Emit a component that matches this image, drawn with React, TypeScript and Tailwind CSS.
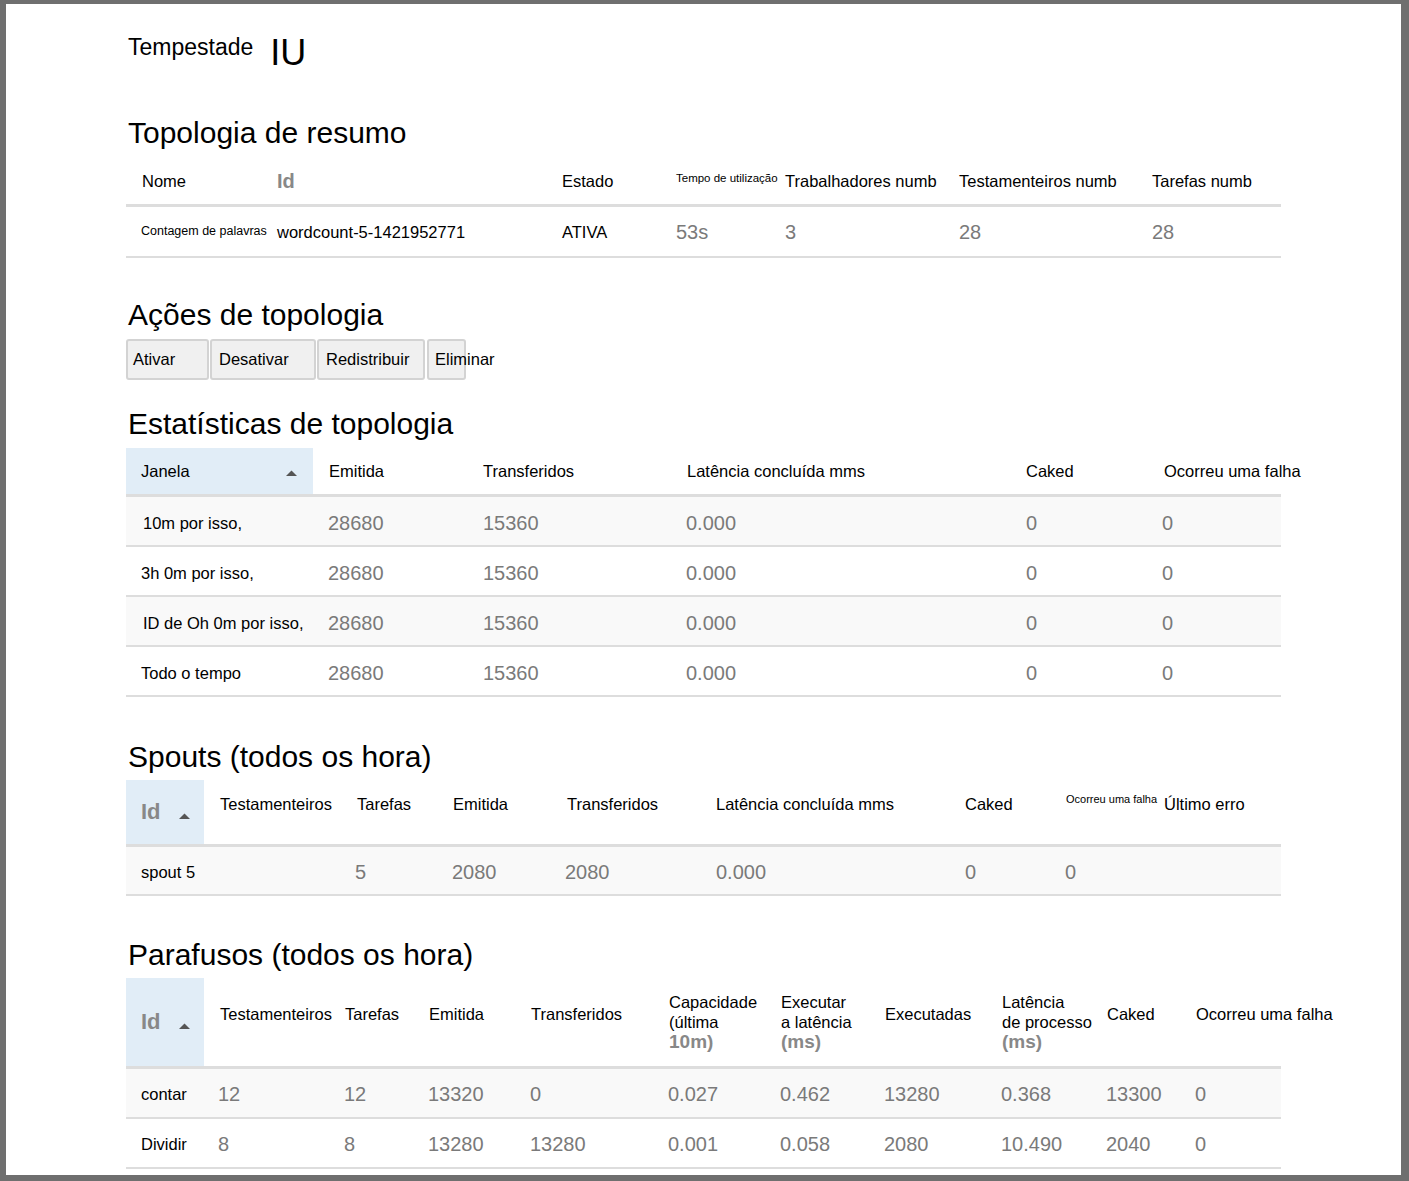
import React from "react";

const LBL = "text-[16.5px] leading-[20px] text-black whitespace-nowrap";
const VAL = "text-[20px] leading-[22px] text-[#7a7a7a] whitespace-nowrap";
const SMALL = "text-[11px] leading-[13px] text-black whitespace-nowrap";
const BOLDG = "font-bold text-[#888] whitespace-nowrap";

const Tri = ({ cls = "" }: { cls?: string }) => (
  <svg width="11" height="6" viewBox="0 0 11 6" className={cls}>
    <polygon points="0,6 5.5,0.5 11,6" fill="#555" />
  </svg>
);

const Cell = ({ children, cls = "" }: { children?: React.ReactNode; cls?: string }) => (
  <div className={`flex items-center h-full ${cls}`}>{children}</div>
);

function Heading({ children, cls = "" }: { children: React.ReactNode; cls?: string }) {
  return <h2 className={`text-[30px] leading-[30px] text-black font-normal ${cls}`}>{children}</h2>;
}

const SUM = "grid grid-cols-[151px_285px_114px_109px_174px_193px_129px]";
const STA = "grid grid-cols-[187px_155px_204px_339px_138px_132px]";
const SPO = "grid grid-cols-[78px_138px_96px_114px_149px_249px_101px_98px_132px]";
const BOL = "grid grid-cols-[78px_126px_84px_102px_138px_112px_104px_117px_105px_89px_100px]";

const statsRows = [
  { label: "10m por isso,", pl: "pl-[17px]" },
  { label: "3h 0m por isso,", pl: "pl-[15px]" },
  { label: "ID de Oh 0m por isso,", pl: "pl-[17px]" },
  { label: "Todo o tempo", pl: "pl-[15px]" },
];

const bolts = [
  ["contar", "12", "12", "13320", "0", "0.027", "0.462", "13280", "0.368", "13300", "0"],
  ["Dividir", "8", "8", "13280", "13280", "0.001", "0.058", "2080", "10.490", "2040", "0"],
];

export default function App() {
  return (
    <div className="w-[1409px] h-[1181px] bg-[#6f6f6f] pt-[4px] pl-[6px] pr-[8px] pb-[6px] font-['Liberation_Sans',Arial,sans-serif]">
      <div className="bg-white h-full overflow-hidden pl-[120px] pt-[30px]">
        {/* Title */}
        <div className="flex items-start h-[36px] pl-[2px]">
          <span className="text-[23px] leading-[23px] text-black mt-[2px]">Tempestade</span>
          <span className="text-[36px] leading-[36px] text-black ml-[17px] mt-[1px]">IU</span>
        </div>

        {/* Summary */}
        <Heading cls="mt-[48px] pl-[2px]">Topologia de resumo</Heading>
        <div className="mt-[10px] w-[1155px]">
          <div className={`${SUM} h-[49px] border-b-[3px] border-[#dddddd]`}>
            <Cell cls="pl-[16px]"><span className={LBL}>Nome</span></Cell>
            <Cell><span className={`${BOLDG} text-[20px]`}>Id</span></Cell>
            <Cell><span className={LBL}>Estado</span></Cell>
            <Cell cls="pb-[6px]"><span className="text-[11.5px] leading-[13px] text-black whitespace-nowrap">Tempo de utilização</span></Cell>
            <Cell><span className={LBL}>Trabalhadores numb</span></Cell>
            <Cell><span className={LBL}>Testamenteiros numb</span></Cell>
            <Cell><span className={LBL}>Tarefas numb</span></Cell>
          </div>
          <div className={`${SUM} h-[51px] border-b-[2px] border-[#dddddd]`}>
            <Cell cls="pl-[15px]"><span className="text-[12.5px] text-black whitespace-nowrap">Contagem de palavras</span></Cell>
            <Cell><span className={LBL}>wordcount-5-1421952771</span></Cell>
            <Cell><span className={LBL}>ATIVA</span></Cell>
            <Cell><span className={VAL}>53s</span></Cell>
            <Cell><span className={VAL}>3</span></Cell>
            <Cell><span className={VAL}>28</span></Cell>
            <Cell><span className={VAL}>28</span></Cell>
          </div>
        </div>

        {/* Actions */}
        <Heading cls="mt-[42px] pl-[2px]">Ações de topologia</Heading>
        <div className="mt-[9px] flex h-[41px] gap-[1px]">
          {[
            { t: "Ativar", w: "w-[83px]", pl: "pl-[5px]" },
            { t: "Desativar", w: "w-[106px]", pl: "pl-[7px]" },
            { t: "Redistribuir", w: "w-[108px]", pl: "pl-[7px]" },
            { t: "Eliminar", w: "w-[39px] ml-[1px]", pl: "pl-[6px]" },
          ].map((b) => (
            <button
              key={b.t}
              className={`${b.w} ${b.pl} h-[41px] flex items-center overflow-visible whitespace-nowrap text-left border-2 border-[#d3d3d3] rounded-[3px] bg-[#f0f0f0] text-[16.5px] text-black`}
            >
              {b.t}
            </button>
          ))}
        </div>

        {/* Stats */}
        <Heading cls="mt-[29px] pl-[2px]">Estatísticas de topologia</Heading>
        <div className="mt-[9px] w-[1155px]">
          <div className={`${STA} h-[49px] border-b-[3px] border-[#dddddd]`}>
            <Cell cls="pl-[15px] pr-[16px] justify-between bg-[#e1edf7]">
              <span className={LBL}>Janela</span>
              <Tri cls="mt-[4px]" />
            </Cell>
            <Cell cls="pl-[16px]"><span className={LBL}>Emitida</span></Cell>
            <Cell cls="pl-[15px]"><span className={LBL}>Transferidos</span></Cell>
            <Cell cls="pl-[15px]"><span className={LBL}>Latência concluída mms</span></Cell>
            <Cell cls="pl-[15px]"><span className={LBL}>Caked</span></Cell>
            <Cell cls="pl-[15px]"><span className={LBL}>Ocorreu uma falha</span></Cell>
          </div>
          {statsRows.map((r, i) => (
            <div
              key={r.label}
              className={`${STA} h-[50px] pt-[4px] border-b-[2px] border-[#dddddd] ${i % 2 === 0 ? "bg-[#f9f9f9]" : "bg-white"}`}
            >
              <Cell cls={r.pl}><span className={LBL}>{r.label}</span></Cell>
              <Cell cls="pl-[15px]"><span className={VAL}>28680</span></Cell>
              <Cell cls="pl-[15px]"><span className={VAL}>15360</span></Cell>
              <Cell cls="pl-[14px]"><span className={VAL}>0.000</span></Cell>
              <Cell cls="pl-[15px]"><span className={VAL}>0</span></Cell>
              <Cell cls="pl-[13px]"><span className={VAL}>0</span></Cell>
            </div>
          ))}
        </div>

        {/* Spouts */}
        <Heading cls="mt-[45px] pl-[2px]">Spouts (todos os hora)</Heading>
        <div className="mt-[8px] w-[1155px]">
          <div className={`${SPO} h-[67px] border-b-[3px] border-[#dddddd]`}>
            <Cell cls="pl-[15px] bg-[#e1edf7]">
              <span className={`${BOLDG} text-[22px] leading-[24px]`}>Id</span>
              <Tri cls="ml-[18px] mt-[8px]" />
            </Cell>
            <Cell cls="pl-[16px] pb-[16px]"><span className={LBL}>Testamenteiros</span></Cell>
            <Cell cls="pl-[15px] pb-[16px]"><span className={LBL}>Tarefas</span></Cell>
            <Cell cls="pl-[15px] pb-[16px]"><span className={LBL}>Emitida</span></Cell>
            <Cell cls="pl-[15px] pb-[16px]"><span className={LBL}>Transferidos</span></Cell>
            <Cell cls="pl-[15px] pb-[16px]"><span className={LBL}>Latência concluída mms</span></Cell>
            <Cell cls="pl-[15px] pb-[16px]"><span className={LBL}>Caked</span></Cell>
            <Cell cls="pl-[15px] pb-[26px]"><span className={SMALL}>Ocorreu uma falha</span></Cell>
            <Cell cls="pl-[15px] pb-[16px]"><span className={LBL}>Último erro</span></Cell>
          </div>
          <div className={`${SPO} h-[49px] pt-[2px] border-b-[2px] border-[#dddddd] bg-[#f9f9f9]`}>
            <Cell cls="pl-[15px]"><span className={LBL}>spout 5</span></Cell>
            <Cell />
            <Cell cls="pl-[13px]"><span className={VAL}>5</span></Cell>
            <Cell cls="pl-[14px]"><span className={VAL}>2080</span></Cell>
            <Cell cls="pl-[13px]"><span className={VAL}>2080</span></Cell>
            <Cell cls="pl-[15px]"><span className={VAL}>0.000</span></Cell>
            <Cell cls="pl-[15px]"><span className={VAL}>0</span></Cell>
            <Cell cls="pl-[14px]"><span className={VAL}>0</span></Cell>
            <Cell />
          </div>
        </div>

        {/* Bolts */}
        <Heading cls="mt-[44px] pl-[2px]">Parafusos (todos os hora)</Heading>
        <div className="mt-[8px] w-[1155px]">
          <div className={`${BOL} h-[91px] border-b-[3px] border-[#dddddd]`}>
            <Cell cls="pl-[15px] bg-[#e1edf7]">
              <span className={`${BOLDG} text-[22px] leading-[24px]`}>Id</span>
              <Tri cls="ml-[18px] mt-[8px]" />
            </Cell>
            <Cell cls="pl-[16px] pb-[16px]"><span className={LBL}>Testamenteiros</span></Cell>
            <Cell cls="pl-[15px] pb-[16px]"><span className={LBL}>Tarefas</span></Cell>
            <Cell cls="pl-[15px] pb-[16px]"><span className={LBL}>Emitida</span></Cell>
            <Cell cls="pl-[15px] pb-[16px]"><span className={LBL}>Transferidos</span></Cell>
            <Cell cls="pl-[15px]">
              <div className="flex flex-col">
                <span className={LBL}>Capacidade</span>
                <span className={LBL}>(última</span>
                <span className={`${BOLDG} text-[19px] leading-[20px]`}>10m)</span>
              </div>
            </Cell>
            <Cell cls="pl-[15px]">
              <div className="flex flex-col">
                <span className={LBL}>Executar</span>
                <span className={LBL}>a latência</span>
                <span className={`${BOLDG} text-[19px] leading-[20px]`}>(ms)</span>
              </div>
            </Cell>
            <Cell cls="pl-[15px] pb-[16px]"><span className={LBL}>Executadas</span></Cell>
            <Cell cls="pl-[15px]">
              <div className="flex flex-col">
                <span className={LBL}>Latência</span>
                <span className={LBL}>de processo</span>
                <span className={`${BOLDG} text-[19px] leading-[20px]`}>(ms)</span>
              </div>
            </Cell>
            <Cell cls="pl-[15px] pb-[16px]"><span className={LBL}>Caked</span></Cell>
            <Cell cls="pl-[15px] pb-[16px]"><span className={LBL}>Ocorreu uma falha</span></Cell>
          </div>
          {bolts.map((r, i) => (
            <div
              key={r[0]}
              className={`${BOL} h-[50px] pt-[2px] border-b-[2px] border-[#dddddd] ${i % 2 === 0 ? "bg-[#f9f9f9]" : "bg-white"}`}
            >
              {r.map((v, j) => (
                <Cell key={j} cls={j === 0 ? "pl-[15px]" : "pl-[14px]"}>
                  <span className={j === 0 ? LBL : VAL}>{v}</span>
                </Cell>
              ))}
            </div>
          ))}
        </div>
      </div>
    </div>
  );
}
